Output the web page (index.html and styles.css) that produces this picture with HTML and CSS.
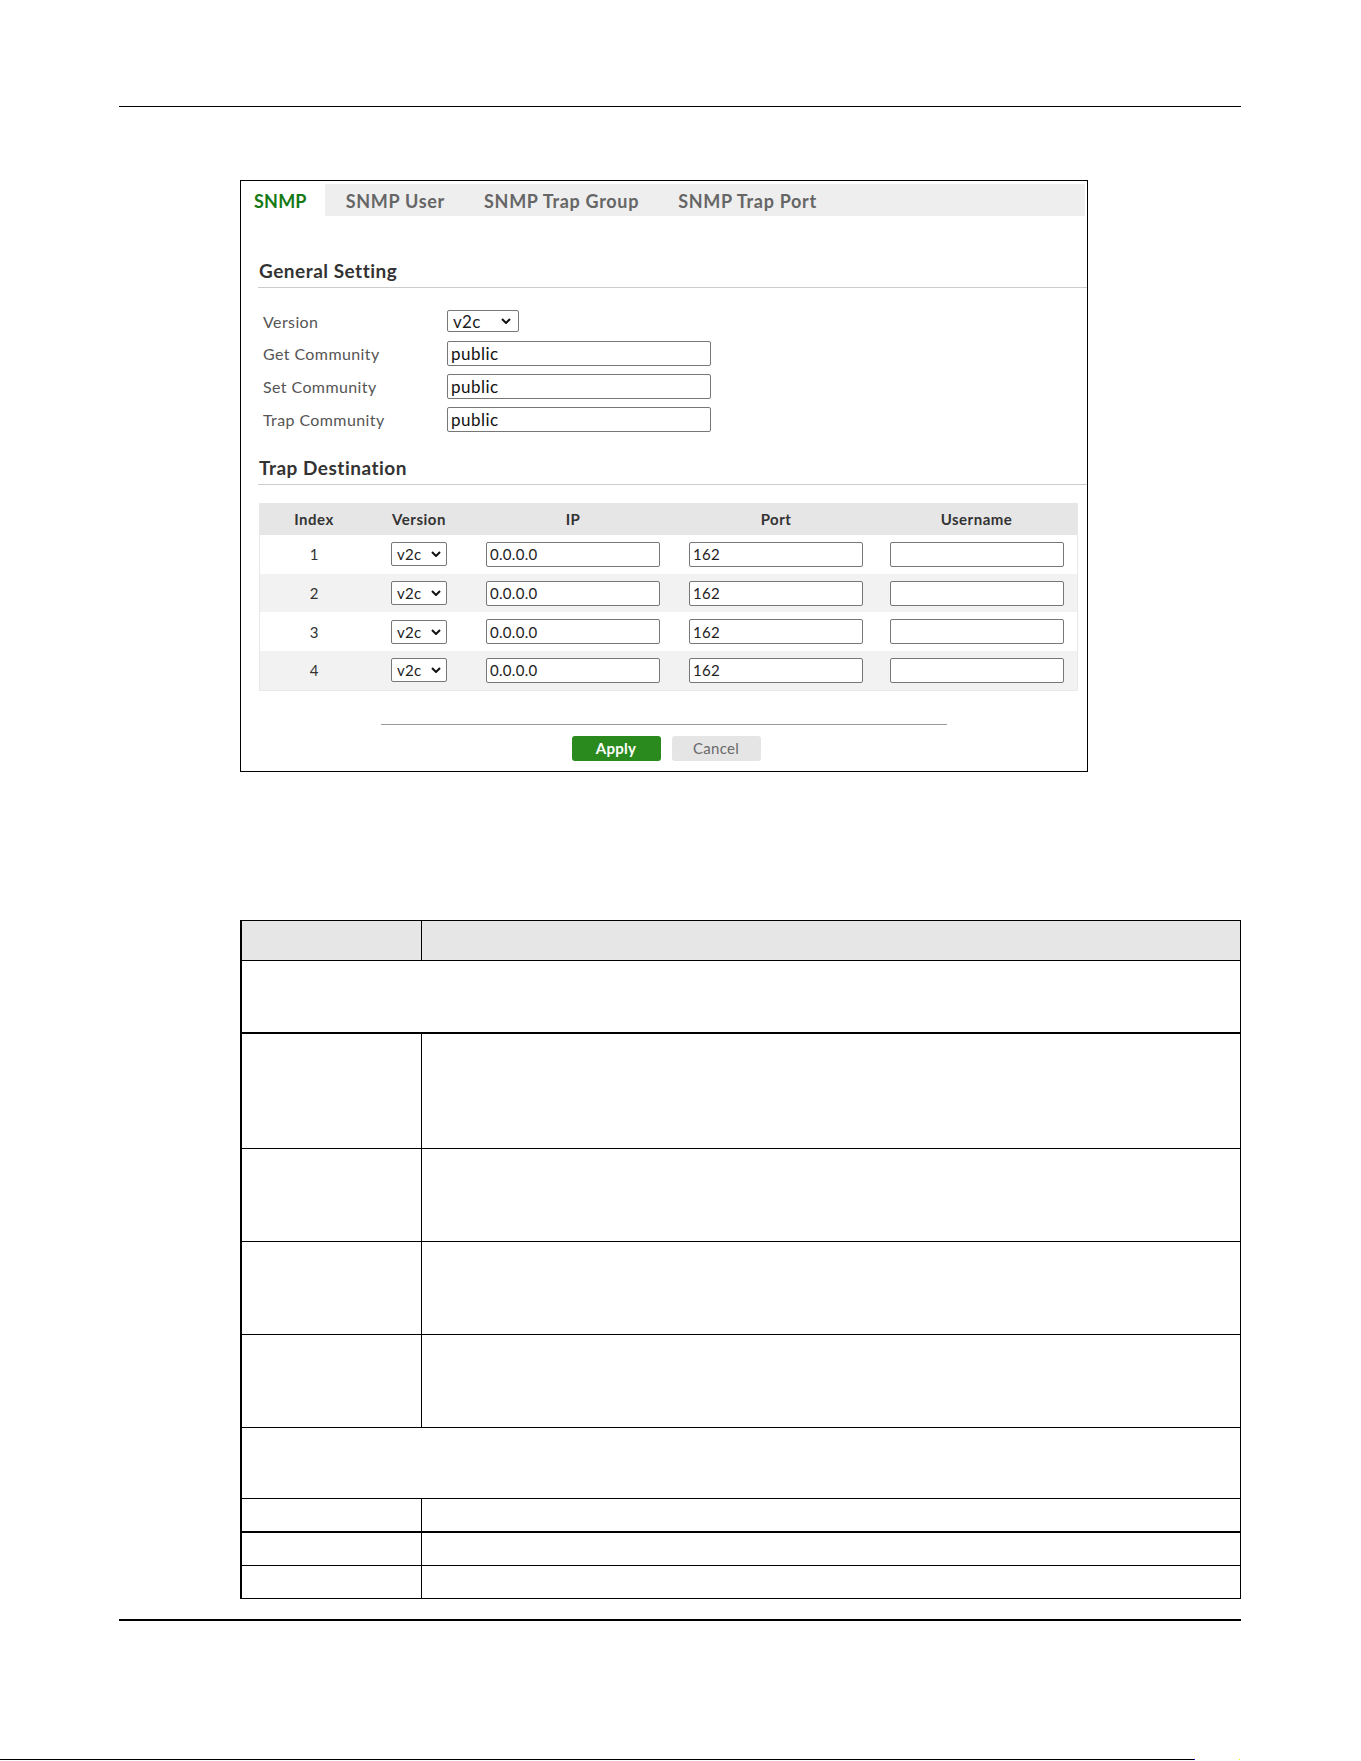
FILE: index.html
```html
<!DOCTYPE html>
<html>
<head>
<meta charset="utf-8"/>
    <title>SNMP</title>
    <link rel="stylesheet" href="styles.css">
</head>
<body>
    <div class="rule-top"></div>

    <div class="panel">
        <ul class="tabs">
            <li class="current">SNMP</li>
            <li>SNMP User</li>
            <li>SNMP Trap Group</li>
            <li>SNMP Trap Port</li>
        </ul>

        <h2 class="sect sect-first">General Setting</h2>
        <div class="form">
            <div class="row row-first">
                <label>Version</label>
                <span class="sel sel-wide">
                    <select><option>v2c</option></select>
                    <svg viewBox="0 0 10 6"><path d="M1 1l4 4 4-4" /></svg>
                </span>
            </div>
            <div class="row">
                <label>Get Community</label>
                <input class="txt" type="text" value="public"/>
            </div>
            <div class="row">
                <label>Set Community</label>
                <input class="txt" type="text" value="public"/>
            </div>
            <div class="row">
                <label>Trap Community</label>
                <input class="txt" type="text" value="public"/>
            </div>
        </div>

        <h2 class="sect">Trap Destination</h2>
        <div class="dest">
            <div class="dest-head">
                <span>Index</span>
                <span>Version</span>
                <span>IP</span>
                <span>Port</span>
                <span>Username</span>
            </div>
            <div class="dest-row">
                <span>1</span>
                <span class="sel"><select><option>v2c</option></select><svg viewBox="0 0 10 6"><path d="M1 1l4 4 4-4" /></svg></span>
                <span><input class="cell" type="text" value="0.0.0.0"/></span>
                <span><input class="cell" type="text" value="162"/></span>
                <span><input class="cell" type="text" value=""/></span>
            </div>
            <div class="dest-row">
                <span>2</span>
                <span class="sel"><select><option>v2c</option></select><svg viewBox="0 0 10 6"><path d="M1 1l4 4 4-4" /></svg></span>
                <span><input class="cell" type="text" value="0.0.0.0"/></span>
                <span><input class="cell" type="text" value="162"/></span>
                <span><input class="cell" type="text" value=""/></span>
            </div>
            <div class="dest-row">
                <span>3</span>
                <span class="sel"><select><option>v2c</option></select><svg viewBox="0 0 10 6"><path d="M1 1l4 4 4-4" /></svg></span>
                <span><input class="cell" type="text" value="0.0.0.0"/></span>
                <span><input class="cell" type="text" value="162"/></span>
                <span><input class="cell" type="text" value=""/></span>
            </div>
            <div class="dest-row">
                <span>4</span>
                <span class="sel"><select><option>v2c</option></select><svg viewBox="0 0 10 6"><path d="M1 1l4 4 4-4" /></svg></span>
                <span><input class="cell" type="text" value="0.0.0.0"/></span>
                <span><input class="cell" type="text" value="162"/></span>
                <span><input class="cell" type="text" value=""/></span>
            </div>
        </div>

        <div class="btn-line"></div>
        <div class="btns">
            <a class="btn btn-apply" href="javascript:;">Apply</a>
            <a class="btn btn-cancel" href="javascript:;">Cancel</a>
        </div>
    </div>

    <table class="desc">
        <tr class="head"><td class="c1"></td><td></td></tr>
        <tr class="h72"><td colspan="2"></td></tr>
        <tr class="h116 thick"><td class="c1"></td><td></td></tr>
        <tr class="h93"><td class="c1"></td><td></td></tr>
        <tr class="h93"><td class="c1"></td><td></td></tr>
        <tr class="h93"><td class="c1"></td><td></td></tr>
        <tr class="h71"><td colspan="2"></td></tr>
        <tr class="h34"><td class="c1"></td><td></td></tr>
        <tr class="h33 thick"><td class="c1"></td><td></td></tr>
        <tr class="h33"><td class="c1"></td><td></td></tr>
    </table>

    <div class="rule-bottom"></div>
    <div class="edge">
        <span class="dot blue"></span>
        <span class="dot yellow"></span>
    </div>
</body>
</html>
```

FILE: styles.css
```css
body { margin: 0; background: #fff; font-family: Lato, "Open Sans", sans-serif; }

.rule-top { margin: 106px 0 0 119px; width: 1122px; border-top: 1px solid #000; }

/* setting panel */
.panel { margin: 73px 0 0 240px; width: 846px; border: 1px solid #000; padding: 3px 0 10px; }

.tabs { margin: 0 2px; padding: 0; list-style: none; display: flex; height: 32px; background: #eee; }
.tabs li { padding: 0 18px 0 21px; line-height: 34px; font-size: 18px; font-weight: bold; color: #666; letter-spacing: 0.7px; }
.tabs li.current { background: #fff; color: #157a15; padding-left: 11px; letter-spacing: 0.2px; }

.sect { margin: 20px 0 0 17px; padding: 0 0 4px 1px; font-size: 19px; line-height: 24px; font-weight: bold; color: #333; border-bottom: 1px solid #ccc; letter-spacing: 0.5px; }
.sect-first { margin-top: 43px; }

.form { padding-top: 17px; }
.row { display: flex; align-items: center; height: 33px; padding-left: 22px; }
.row-first { height: 32px; }
.row label { width: 184px; font-size: 16px; color: #555; letter-spacing: 0.4px; }

.txt { box-sizing: border-box; width: 264px; height: 25px; margin: 0; padding: 0 3px; border: 1px solid #777; border-radius: 2px; font: 17px Lato, sans-serif; letter-spacing: 0.5px; color: #111; }

.sel { position: relative; display: inline-block; justify-self: center; }
.sel select { -webkit-appearance: none; appearance: none; display: block; box-sizing: border-box; width: 56px; height: 24px; margin: 0; padding: 0 0 0 5px; border: 1px solid #777; border-radius: 2px; background: #fff; font: 15px Lato, sans-serif; letter-spacing: 0.3px; color: #222; }
.sel svg { position: absolute; right: 6px; top: 9px; width: 10px; height: 6px; fill: none; stroke: #111; stroke-width: 2; pointer-events: none; }
.sel-wide select { width: 72px; height: 22px; font-size: 17px; }
.sel-wide svg { right: 8px; top: 8px; }

/* trap destination table */
.dest { margin: 18px 9px 0 18px; border: 1px solid #e8e8e8; border-top: 0; }
.dest-head, .dest-row { display: grid; grid-template-columns: 108px 102px 206px 200px 1fr; align-items: center; text-align: center; }
.dest-head { height: 32px; background: #e6e6e6; font-size: 15px; font-weight: bold; color: #333; letter-spacing: 0.5px; }
.dest-row { height: 38.7px; font-size: 15px; color: #333; }
.dest-row:nth-child(odd) { background: #f2f2f2; }
.cell { display: block; margin: 0 auto; box-sizing: border-box; width: 174px; height: 25px; padding: 0 3px; border: 1px solid #777; border-radius: 2px; font: 15px Lato, sans-serif; letter-spacing: 0.3px; color: #222; }

.btn-line { margin: 33px auto 0; width: 566px; border-top: 1px solid #999; }
.btns { display: flex; justify-content: center; gap: 11px; margin-top: 11px; padding-left: 4px; }
.btn { width: 89px; height: 25px; line-height: 25px; text-align: center; border-radius: 3px; font-size: 15px; text-decoration: none; letter-spacing: 0.3px; }
.btn-apply { background: #2b8a1e; color: #fff; font-weight: bold; }
.btn-cancel { background: #e5e5e5; color: #6a6a6a; }

/* description table */
.desc { margin: 148px 0 0 240px; width: 1001px; border-collapse: collapse; border-left: 2px solid #000; border-top: 1px solid #000; border-right: 1px solid #000; }
.desc td { padding: 0; border-bottom: 1px solid #000; }
.desc td.c1 { width: 179px; border-right: 1px solid #000; }
.desc tr.head td { height: 39px; background: #e6e6e6; }
.desc tr.thick td { border-top: 2px solid #000; }
.desc tr.h72 td { height: 71px; }
.desc tr.h116 td { height: 114px; }
.desc tr.h93 td { height: 92px; }
.desc tr.h71 td { height: 70px; }
.desc tr.h34 td { height: 32px; }
.desc tr.h33 td { height: 32px; }

.rule-bottom { margin: 20px 0 0 119px; width: 1122px; border-top: 2px solid #000; }

.edge { margin-top: 138px; width: 1194px; border-top: 1px solid #000; position: relative; height: 0; }
.dot { position: absolute; top: -1px; width: 1px; height: 1px; }
.blue { left: 1194px; background: #00f; }
.yellow { left: 1239px; background: #ff0; }
```
